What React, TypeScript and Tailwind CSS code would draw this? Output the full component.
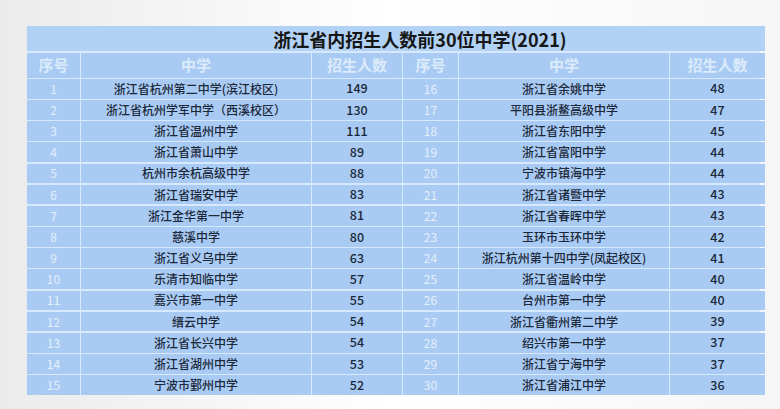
const left = [
  ["浙江省杭州第二中学(滨江校区)", 149],
  ["浙江省杭州学军中学（西溪校区）", 130],
  ["浙江省温州中学", 111],
  ["浙江省萧山中学", 89],
  ["杭州市余杭高级中学", 88],
  ["浙江省瑞安中学", 83],
  ["浙江金华第一中学", 81],
  ["慈溪中学", 80],
  ["浙江省义乌中学", 63],
  ["乐清市知临中学", 57],
  ["嘉兴市第一中学", 55],
  ["缙云中学", 54],
  ["浙江省长兴中学", 54],
  ["浙江省湖州中学", 53],
  ["宁波市鄞州中学", 52],
] as const;

const right = [
  ["浙江省余姚中学", 48],
  ["平阳县浙鳌高级中学", 47],
  ["浙江省东阳中学", 45],
  ["浙江省富阳中学", 44],
  ["宁波市镇海中学", 44],
  ["浙江省诸暨中学", 43],
  ["浙江省春晖中学", 43],
  ["玉环市玉环中学", 42],
  ["浙江杭州第十四中学(凤起校区)", 41],
  ["浙江省温岭中学", 40],
  ["台州市第一中学", 40],
  ["浙江省衢州第二中学", 39],
  ["绍兴市第一中学", 37],
  ["浙江省宁海中学", 37],
  ["浙江省浦江中学", 36],
] as const;

const cell = "bg-[#a9cbf3] flex items-center justify-center";

function Header() {
  return (
    <>
      {["序号", "中学", "招生人数", "序号", "中学", "招生人数"].map((h, i) => (
        <div key={i} className={`${cell} text-[15px] font-bold text-[#dcebfb]`}>
          {h}
        </div>
      ))}
    </>
  );
}

export default function App() {
  return (
    <div
      className="w-[780px] h-[409px] pt-[26px] pl-[27px] bg-gradient-to-r from-[#ebebeb] via-white to-[#f6f6f6]"
      style={{ fontFamily: '"Noto Sans CJK SC", "Noto Sans", sans-serif' }}
    >
      <div className="w-[733px] h-[369px] grid grid-cols-[53px_230px_90px_55px_210px_95px] grid-rows-[25px_25px_repeat(15,1fr)] gap-x-px gap-y-[1.5px] bg-[#d7eafd]">
        <div className="col-span-6 bg-[#b2d2f5] flex items-center justify-center pl-[48px] text-[18px] font-semibold text-[#161616] leading-none">
          浙江省内招生人数前30位中学(2021)
        </div>
        <Header />
        {left.map(([name, n], i) => {
          const [rname, rn] = right[i];
          return [
            <div key={`a${i}`} className={`${cell} text-[12px] text-[#e4effb]`}>{i + 1}</div>,
            <div key={`b${i}`} className={`${cell} text-[12px] font-medium text-[#1b2839]`}>{name}</div>,
            <div key={`c${i}`} className={`${cell} text-[12.5px] font-medium text-[#1b2839]`}>{n}</div>,
            <div key={`d${i}`} className={`${cell} text-[12px] text-[#e4effb]`}>{i + 16}</div>,
            <div key={`e${i}`} className={`${cell} text-[12px] font-medium text-[#1b2839]`}>{rname}</div>,
            <div key={`f${i}`} className={`${cell} text-[12.5px] font-medium text-[#1b2839]`}>{rn}</div>,
          ];
        })}
      </div>
    </div>
  );
}
